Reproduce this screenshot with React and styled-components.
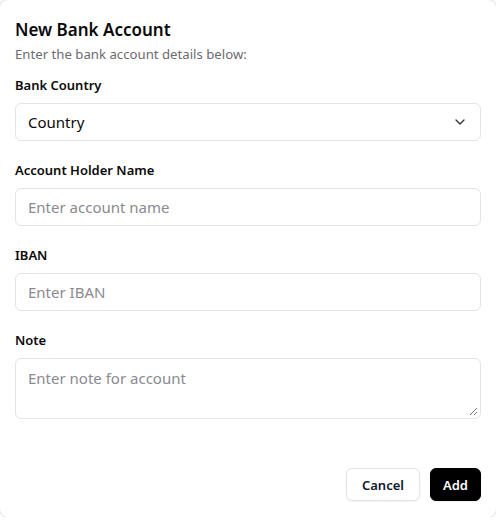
import styled, { createGlobalStyle } from "styled-components";

const GlobalStyle = createGlobalStyle`
  html, body {
    margin: 0;
    padding: 0;
    background: #ffffff;
    font-family: "Noto Sans", "Open Sans", sans-serif;
  }
  * { box-sizing: border-box; }
`;

const Dialog = styled.div`
  width: 496px;
  height: 517px;
  background: #fff;
  border-radius: 8px;
  box-shadow: 0 0 3px rgba(0, 0, 0, 0.25);
  padding: 18px 15px 16px 15px;
  display: flex;
  flex-direction: column;
`;

const Title = styled.h2`
  margin: 0;
  font-size: 17px;
  font-weight: 600;
  line-height: 24px;
  color: #0a0a0a;
`;

const Subtitle = styled.p`
  margin: 3px 0 0 0;
  font-size: 13.2px;
  line-height: 18px;
  color: #6b6b70;
`;

const Form = styled.div`
  display: flex;
  flex-direction: column;
  gap: 20px;
  margin-top: 13px;
`;

const Field = styled.div`
  display: flex;
  flex-direction: column;
  gap: 9px;
`;

const Label = styled.label`
  font-size: 13px;
  font-weight: 600;
  line-height: 18px;
  color: #0a0a0a;
`;

const Box = styled.div`
  height: ${p => p.tall ? "61px" : "38px"};
  border: 1px solid #e4e4e7;
  border-radius: 6px;
  background: #fff;
  padding: 0 12px;
  display: flex;
  align-items: ${p => p.tall ? "flex-start" : "center"};
  justify-content: space-between;
  font-size: 15px;
  color: ${p => p.placeholder ? "#8a8a8f" : "#0a0a0a"};
  position: relative;
  padding-top: ${p => p.tall ? "9px" : "0"};
`;

const Grip = styled.svg`
  position: absolute;
  right: 2px;
  bottom: 2px;
`;

const Footer = styled.div`
  margin-top: auto;
  display: flex;
  justify-content: flex-end;
  gap: 10px;
`;

const Button = styled.button`
  height: 33px;
  padding: 0 ${p => p.primary ? "12px" : "15px"};
  border-radius: 6px;
  font-family: inherit;
  font-size: 13px;
  font-weight: 600;
  border: 1px solid ${p => p.primary ? "#000" : "#e4e4e7"};
  background: ${p => p.primary ? "#000" : "#fff"};
  color: ${p => p.primary ? "#fff" : "#0f172a"};
  box-shadow: 0 1px 2px rgba(0,0,0,0.06);
`;

export default function App() {
  return (
    <>
      <GlobalStyle />
      <Dialog>
        <Title>New Bank Account</Title>
        <Subtitle>Enter the bank account details below:</Subtitle>
        <Form>
          <Field>
            <Label>Bank Country</Label>
            <Box>
              Country
              <svg width="16" height="16" viewBox="0 0 24 24" fill="none" stroke="#333" strokeWidth="2" strokeLinecap="round" strokeLinejoin="round">
                <path d="m6 9 6 6 6-6" />
              </svg>
            </Box>
          </Field>
          <Field>
            <Label>Account Holder Name</Label>
            <Box placeholder="1">Enter account name</Box>
          </Field>
          <Field>
            <Label>IBAN</Label>
            <Box placeholder="1">Enter IBAN</Box>
          </Field>
          <Field>
            <Label>Note</Label>
            <Box placeholder="1" tall>
              Enter note for account
              <Grip width="9" height="9" viewBox="0 0 9 9">
                <path d="M8 1 L1 8 M8 5 L5 8" stroke="#777" strokeWidth="1" />
              </Grip>
            </Box>
          </Field>
        </Form>
        <Footer>
          <Button>Cancel</Button>
          <Button primary>Add</Button>
        </Footer>
      </Dialog>
    </>
  );
}
